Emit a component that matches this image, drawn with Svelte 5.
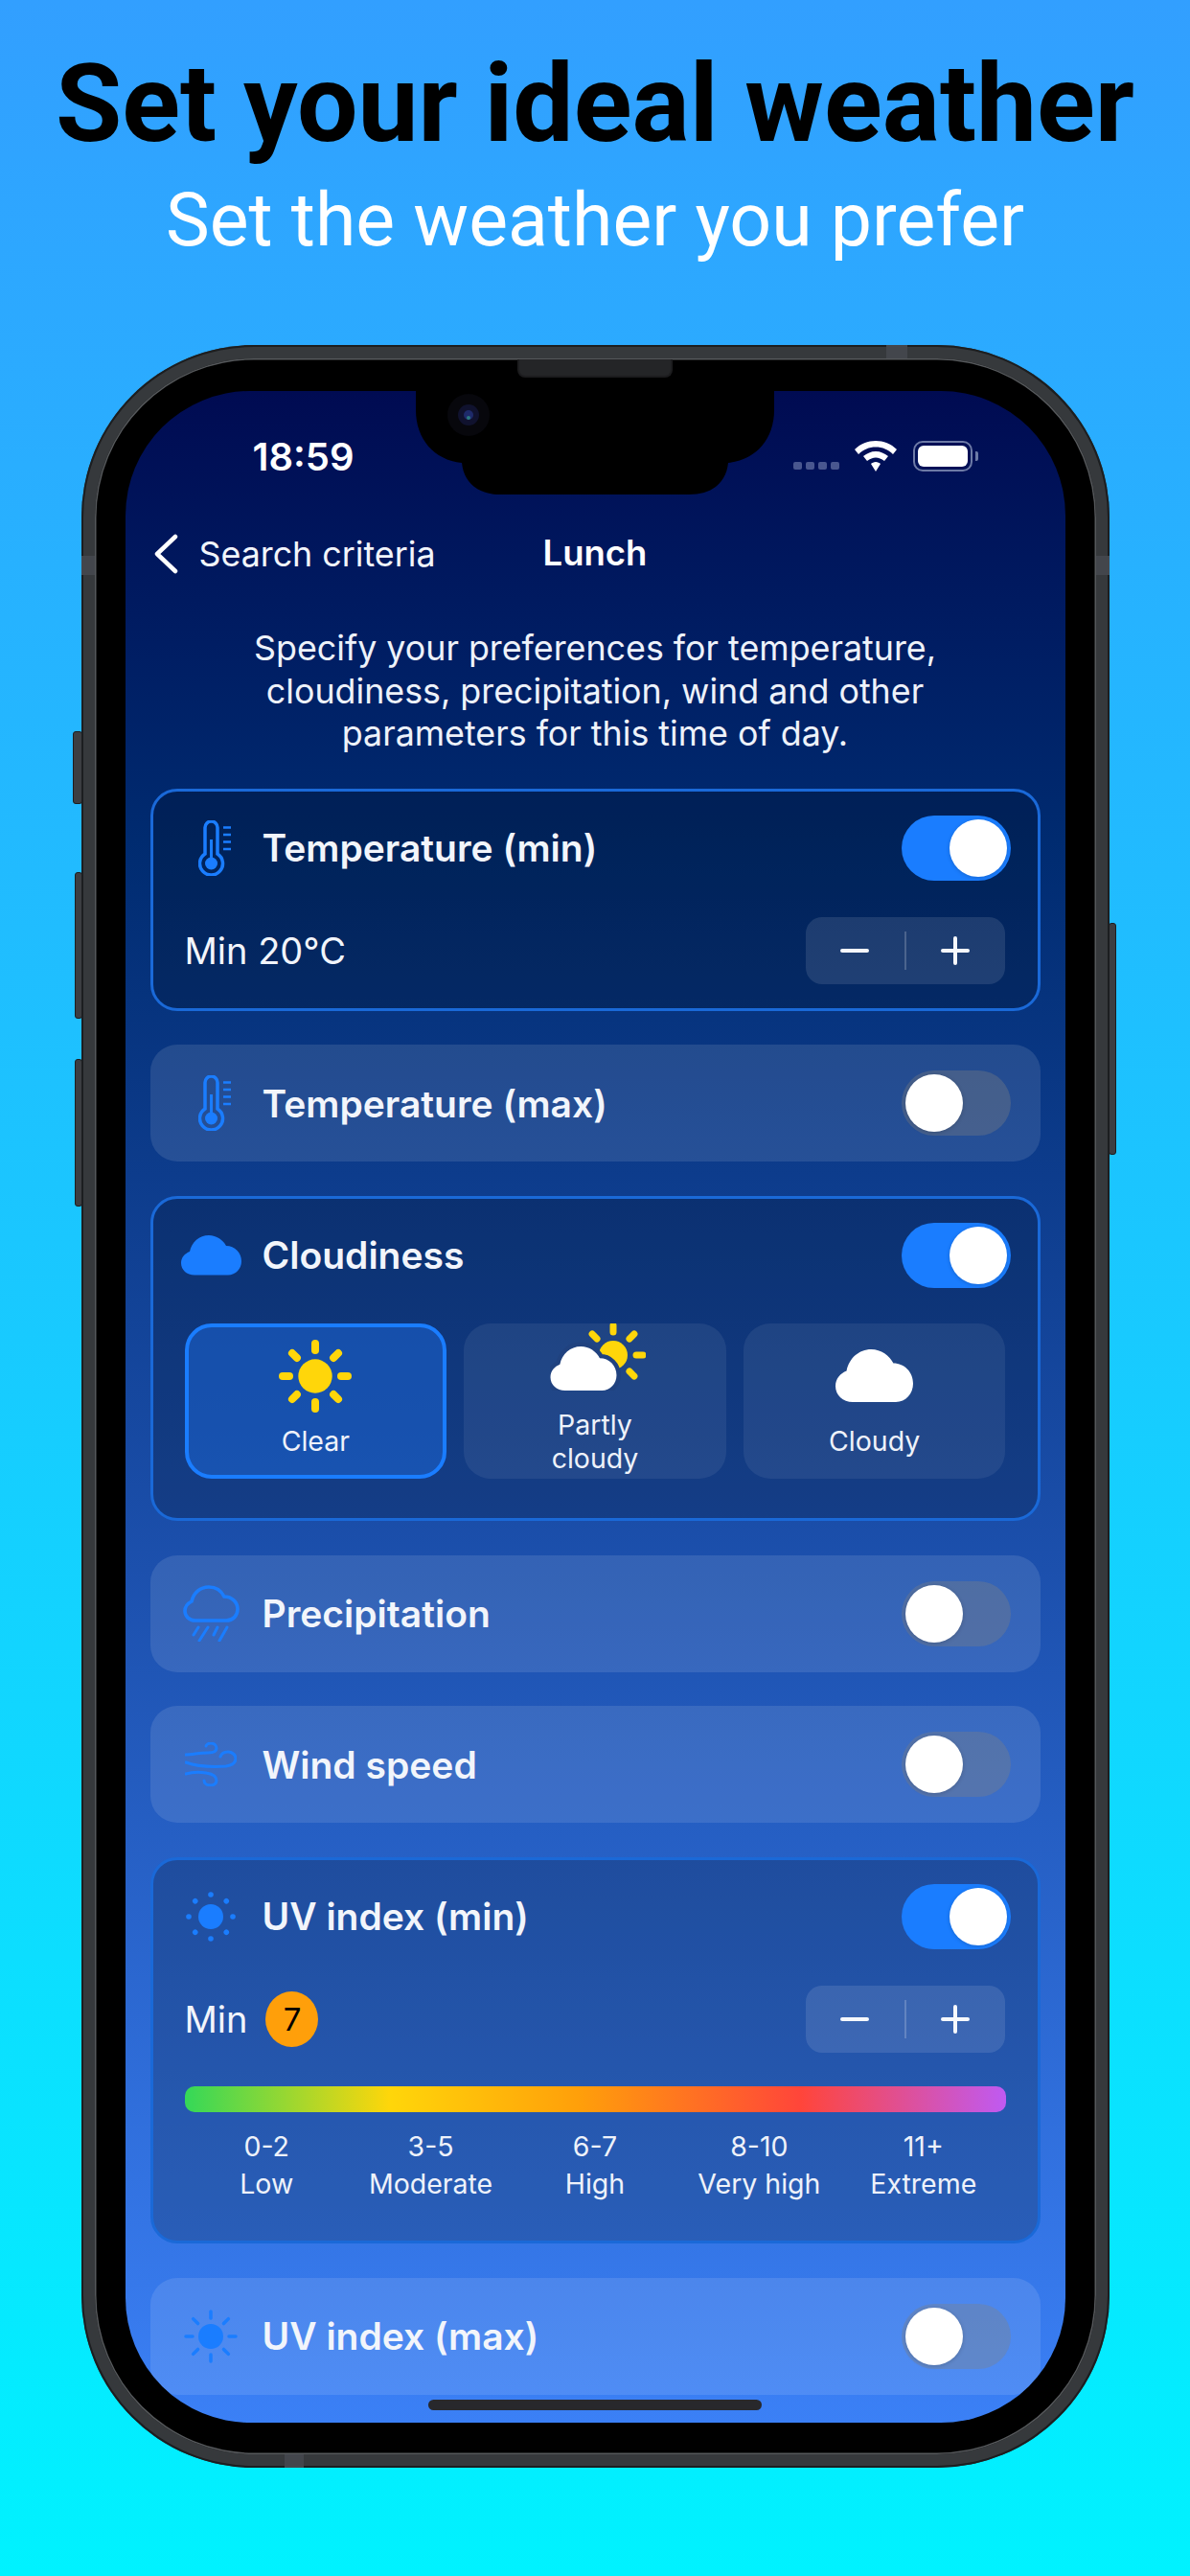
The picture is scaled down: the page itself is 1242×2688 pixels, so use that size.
<script lang="ts">
	const scale = [
		['0-2', 'Low'],
		['3-5', 'Moderate'],
		['6-7', 'High'],
		['8-10', 'Very high'],
		['11+', 'Extreme']
	];
	const diagonals = [0, 45, 90, 135, 180, 225, 270, 315];
	const cloud =
		'M14 41.5C6 41.5 0 36 0 29C0 23 4 19 9 17C11 7 19 0 29 0C37 0 44 5 47 11C56 11 63 18 63 27C63 35 57 41.5 49 41.5Z';
</script>

{#snippet thermometer()}
	<svg class="thermo" width="34" height="58" viewBox="0 0 34 58" fill="none" stroke="#1a7dff">
		<path stroke-width="3.5" d="M7 35V7.5a6.5 6.5 0 0 1 13 0V35A12 12 0 1 1 7 35Z" />
		<path stroke-width="3" d="M13.5 20V40" />
		<circle cx="13.5" cy="45" r="6.5" fill="#1a7dff" stroke="none" />
		<path stroke-width="2.6" d="M26 7.5h8M26 15h8M26 22.5h8M26 30h8" />
	</svg>
{/snippet}

{#snippet toggle(on: boolean)}
	<div class="toggle" class:on><div class="thumb"></div></div>
{/snippet}

{#snippet stepper()}
	<div class="stepper">
		<span class="step"><i class="bar"></i></span>
		<span class="divider"></span>
		<span class="step"><i class="bar"></i><i class="bar upright"></i></span>
	</div>
{/snippet}

<div class="page">
	<header class="hero">
		<h1>Set your ideal weather</h1>
		<p>Set the weather you prefer</p>
	</header>

	<div class="phone">
		<i class="side mute"></i>
		<i class="side vol-up"></i>
		<i class="side vol-down"></i>
		<i class="side power"></i>
		<i class="band band-top"></i>
		<i class="band band-bottom"></i>
		<i class="band band-left"></i>
		<i class="band band-right"></i>
		<div class="bezel">
			<div class="speaker"></div>
			<div class="screen">
				<svg class="notch" width="374" height="108" viewBox="0 0 374 108">
					<path
						fill="#000"
						d="M0 0H374V20C374 50 355 72 326 75C324 95 310 108 285 108H89C64 108 50 95 48 75C19 72 0 50 0 20Z"
					/>
					<circle cx="55" cy="25" r="22" fill="#07070c" />
					<circle cx="55" cy="25" r="11" fill="#10122e" />
					<circle cx="55" cy="25" r="5" fill="#1e2a6a" />
					<circle cx="55" cy="28" r="2" fill="#2a7a80" />
				</svg>

				<div class="status">
					<span class="time">18:59</span>
					<div class="status-right">
						<div class="dots"><i></i><i></i><i></i><i></i></div>
						<svg width="44" height="32" viewBox="0 0 44 32">
							<path
								fill="#fff"
								d="M22 0C30 0 38 3 44 9L40 14C35 9 29 6.500 22 6.500C15 6.500 9 9 4 14L0 9C6 3 14 0 22 0ZM22 11C27 11 31 13 35 16L31 21C28 19 25 17.500 22 17.500C19 17.500 16 19 13 21L9 16C13 13 17 11 22 11ZM22 22C24 22 26 23 27 24L22 32L17 24C18 23 20 22 22 22Z"
							/>
						</svg>
						<div class="battery"><div class="charge"></div></div>
					</div>
				</div>

				<nav class="nav">
					<div class="back">
						<svg width="26" height="42" viewBox="0 0 26 42" fill="none">
							<path d="M23 3L4 21L23 39" stroke="#fff" stroke-width="4.500" stroke-linecap="round" stroke-linejoin="round" />
						</svg>
						<span>Search criteria</span>
					</div>
					<strong>Lunch</strong>
				</nav>

				<p class="intro">
					Specify your preferences for temperature,<br />
					cloudiness, precipitation, wind and other<br />
					parameters for this time of day.
				</p>

				<div class="cards">
					<section class="card active">
						<div class="row">
							<div class="icon-box">{@render thermometer()}</div>
							<h2>Temperature (min)</h2>
							{@render toggle(true)}
						</div>
						<div class="value-row last">
							<span class="value">Min 20°C</span>
							{@render stepper()}
						</div>
					</section>

					<section class="card">
						<div class="row">
							<div class="icon-box">{@render thermometer()}</div>
							<h2>Temperature (max)</h2>
							{@render toggle(false)}
						</div>
					</section>

					<section class="card active">
						<div class="row">
							<div class="icon-box">
								<svg width="63" height="42" viewBox="0 0 63 42"><path fill="#1a7dff" d={cloud} /></svg>
							</div>
							<h2>Cloudiness</h2>
							{@render toggle(true)}
						</div>
						<div class="tiles">
							<div class="tile selected">
								<svg width="76" height="76" viewBox="-38 -38 76 76">
									<circle r="17.700" fill="#ffd60a" />
									{#each diagonals as a}
										<path
											d="M0 -34V-27"
											stroke="#ffd60a"
											stroke-width="8"
											stroke-linecap="round"
											transform="rotate({a})"
										/>
									{/each}
								</svg>
								<span class="tile-label">Clear</span>
							</div>
							<div class="tile partly">
								<svg width="100" height="70" viewBox="0 0 100 70">
									<g transform="translate(66 33)">
										<circle r="15" fill="#ffd60a" />
										{#each [0, 45, 90, 135, 315] as a}
											<path
												d="M0 -31V-24"
												stroke="#ffd60a"
												stroke-width="7"
												stroke-linecap="round"
												transform="rotate({a})"
											/>
										{/each}
									</g>
									<path
										transform="translate(0.5 24) scale(1.095 1.108)"
										fill="#fff"
										stroke="#20427f"
										stroke-width="8"
										paint-order="stroke"
										d={cloud}
									/>
								</svg>
								<span class="tile-label">Partly<br />cloudy</span>
							</div>
							<div class="tile cloudy">
								<svg width="81" height="55" viewBox="0 0 63 41.500" preserveAspectRatio="none"><path fill="#fff" d={cloud} /></svg>
								<span class="tile-label">Cloudy</span>
							</div>
						</div>
					</section>

					<section class="card">
						<div class="row">
							<div class="icon-box">
								<svg width="59" height="59" viewBox="0 0 59 59" fill="none" stroke="#1a7dff" stroke-linecap="round">
									<path
										stroke-width="3.600"
										d="M13 37C6 37 2 32 2 27C2 22 5 19 9 17C11 8 18 2 27 2C34 2 40 6 43 12C51 12 57 18 57 25C57 32 52 37 45 37Z"
									/>
									<path stroke-width="3" d="M16 44L11 52M26 44L17 58M36 44L32 52M46 44L38 58" />
								</svg>
							</div>
							<h2>Precipitation</h2>
							{@render toggle(false)}
						</div>
					</section>

					<section class="card">
						<div class="row">
							<div class="icon-box">
								<svg width="54" height="46" viewBox="0 0 54 46" fill="none" stroke="#1a7dff" stroke-width="3" stroke-linecap="round">
									<path d="M1 13C8 13 15 11 24 11C30 11 33 9 33 6C33 3 30 1 27 1C24 1 22 3 22 4" />
									<path d="M1 21C12 25 28 26 43 25C49 24 53 22 53 17C53 13 49 10 45 10C41 10 38 12 37 15" />
									<path d="M1 33C8 31 15 31 22 32C29 33 33 36 33 40C33 43 30 45 27 45C23 45 20 43 20 40" />
								</svg>
							</div>
							<h2>Wind speed</h2>
							{@render toggle(false)}
						</div>
					</section>

					<section class="card active">
						<div class="row">
							<div class="icon-box">
								<svg width="52" height="52" viewBox="-26 -26 52 52">
									<circle r="13" fill="#1a7dff" />
									{#each diagonals as a}
										<circle cy="-23" r="2.800" fill="#1a7dff" transform="rotate({a})" />
									{/each}
								</svg>
							</div>
							<h2>UV index (min)</h2>
							{@render toggle(true)}
						</div>
						<div class="value-row">
							<span class="value">Min <b class="badge">7</b></span>
							{@render stepper()}
						</div>
						<div class="uv-bar"></div>
						<div class="uv-scale">
							{#each scale as [range, label]}
								<div>{range}<br />{label}</div>
							{/each}
						</div>
					</section>

					<section class="card">
						<div class="row">
							<div class="icon-box">
								<svg width="56" height="56" viewBox="-28 -28 56 56">
									<circle r="13" fill="#1a7dff" />
									{#each diagonals as a}
										<path d="M0 -26V-19" stroke="#1a7dff" stroke-width="3.500" stroke-linecap="round" transform="rotate({a})" />
									{/each}
								</svg>
							</div>
							<h2>UV index (max)</h2>
							{@render toggle(false)}
						</div>
					</section>
				</div>

				<div class="home"></div>
			</div>
		</div>
	</div>
</div>

<style>
	:global(body) {
		margin: 0;
	}

	.page {
		width: 1242px;
		height: 2688px;
		overflow: hidden;
		background: linear-gradient(180deg, #329fff 0%, #00f2ff 100%);
		font-family: 'Inter', 'Liberation Sans', sans-serif;
		color: #f2f5fb;
	}

	.hero {
		height: 360px;
		text-align: center;
		font-family: 'Roboto', 'Liberation Sans', sans-serif;
	}

	.hero h1 {
		margin: 0;
		padding-top: 48px;
		font-size: 112.500px;
		line-height: 122px;
		font-weight: 700;
		color: #000;
	}

	.hero p {
		margin: 0;
		padding-top: 14px;
		font-size: 77px;
		line-height: 92px;
		font-weight: 400;
		color: #fff;
	}

	.phone {
		position: relative;
		box-sizing: border-box;
		width: 1073px;
		height: 2215px;
		margin: 0 auto;
		padding: 14px;
		border-radius: 180px;
		background: #36393c;
		box-shadow: inset 0 0 0 2px #1c1e20;
	}

	.side {
		position: absolute;
		box-sizing: border-box;
		background: #3c3e42;
		border: 1px solid #1c1e20;
		border-radius: 3px;
	}

	.mute {
		left: -9px;
		top: 403px;
		width: 10px;
		height: 76px;
	}

	.vol-up {
		left: -7px;
		top: 550px;
		width: 8px;
		height: 153px;
	}

	.vol-down {
		left: -7px;
		top: 745px;
		width: 8px;
		height: 154px;
	}

	.power {
		right: -7px;
		top: 603px;
		width: 8px;
		height: 242px;
	}

	.band {
		position: absolute;
		background: #43464c;
	}

	.band-top {
		top: 0;
		left: 840px;
		width: 22px;
		height: 14px;
	}

	.band-bottom {
		bottom: 0;
		left: 212px;
		width: 20px;
		height: 14px;
	}

	.band-left {
		left: 0;
		top: 220px;
		width: 14px;
		height: 20px;
	}

	.band-right {
		right: 0;
		top: 220px;
		width: 14px;
		height: 20px;
	}

	.bezel {
		position: relative;
		height: 100%;
		box-sizing: border-box;
		padding: 34px 32px 32px;
		border-radius: 166px;
		background: #000;
		box-shadow: inset 0 0 0 1.5px #55585b;
	}

	.speaker {
		position: absolute;
		z-index: 2;
		top: 1px;
		left: 50%;
		width: 162px;
		height: 19px;
		transform: translateX(-50%);
		box-sizing: border-box;
		border: 2px solid #1c1c1e;
		border-top: 0;
		border-radius: 0 0 8px 8px;
		background: #242527;
	}

	.screen {
		position: relative;
		box-sizing: border-box;
		height: 2120px;
		overflow: hidden;
		border-radius: 130px;
		padding: 0 26px;
		background: linear-gradient(180deg, #000b52 0%, #002b70 22%, #1c50ad 58%, #3b80f6 100%);
	}

	.notch {
		position: absolute;
		top: 0;
		left: 303px;
	}

	.status {
		display: flex;
		justify-content: space-between;
		align-items: flex-end;
		height: 84px;
		padding: 0 71px 0 107px;
	}

	.time {
		font-size: 40px;
		line-height: 40px;
		font-weight: 600;
		color: #fff;
		margin-bottom: -5px;
	}

	.status-right {
		display: flex;
		align-items: flex-end;
		gap: 17px;
	}

	.dots {
		display: flex;
		gap: 4px;
		margin-bottom: 2px;
		margin-right: -1px;
	}

	.dots i {
		width: 9px;
		height: 8px;
		border-radius: 2px;
		background: #49578f;
	}

	.battery {
		position: relative;
		box-sizing: border-box;
		width: 62px;
		height: 32px;
		padding: 3px;
		border: 2.500px solid #6d7aa6;
		border-radius: 10px;
	}

	.battery::after {
		content: '';
		position: absolute;
		right: -8px;
		top: 9px;
		width: 3px;
		height: 10px;
		border-radius: 0 2px 2px 0;
		background: #6d7aa6;
	}

	.charge {
		height: 100%;
		border-radius: 6px;
		background: #fff;
	}

	.nav {
		position: relative;
		display: flex;
		align-items: center;
		justify-content: center;
		height: 42px;
		margin-top: 64px;
	}

	.nav strong {
		font-size: 36.500px;
		font-weight: 600;
		color: #fff;
	}

	.back {
		position: absolute;
		left: 3px;
		top: 0;
		display: flex;
		align-items: center;
		gap: 22px;
		font-size: 35.800px;
	}

	.intro {
		margin: 56px 0 0;
		text-align: center;
		font-size: 35.800px;
		line-height: 44.500px;
		color: #eef2fa;
	}

	.cards {
		display: flex;
		flex-direction: column;
		gap: 35.700px;
		margin-top: 35px;
	}

	.card {
		flex: none;
		box-sizing: border-box;
		min-height: 122px;
		padding: 0 33px;
		border-radius: 28px;
		background: rgba(255, 255, 255, 0.11);
	}

	.card.active {
		border: 3px solid #1a69d8;
		background: rgba(0, 0, 0, 0.2);
	}

	.row {
		display: flex;
		align-items: center;
		height: 122px;
	}

	.card.active .row {
		height: 118px;
		margin-left: -3px;
		margin-right: -3px;
	}

	.icon-box {
		display: flex;
		justify-content: center;
		align-items: center;
		flex: none;
		width: 63px;
		margin-left: -1px;
		margin-right: 22px;
	}

	.icon-box svg {
		display: block;
	}

	.thermo {
		margin-left: 7px;
	}

	h2 {
		flex: 1;
		margin: 0;
		font-size: 39px;
		font-weight: 600;
		color: #f2f5fb;
	}

	.toggle {
		position: relative;
		flex: none;
		width: 114px;
		height: 68px;
		margin-right: -2px;
		border-radius: 34px;
		background: rgba(130, 130, 130, 0.35);
	}

	.toggle.on {
		background: #1a7dff;
	}

	.thumb {
		position: absolute;
		top: 4px;
		left: 4px;
		width: 60px;
		height: 60px;
		border-radius: 50%;
		background: #fff;
		box-shadow: 0 1px 4px rgba(0, 0, 0, 0.18);
	}

	.toggle.on .thumb {
		left: 50px;
	}

	.value-row {
		display: flex;
		align-items: center;
		justify-content: space-between;
		height: 70px;
		margin-top: 13px;
	}

	.value-row.last {
		margin-bottom: 25px;
	}

	.value {
		display: flex;
		align-items: center;
		gap: 19px;
		font-size: 38px;
		color: #f2f5fb;
	}

	.badge {
		display: flex;
		align-items: center;
		justify-content: center;
		width: 55px;
		height: 58px;
		border-radius: 50%;
		background: #ff9f0a;
		color: #000;
		font-size: 33px;
		font-weight: 400;
	}

	.stepper {
		display: flex;
		align-items: center;
		width: 208px;
		height: 70px;
		margin-right: 1px;
		border-radius: 17px;
		background: rgba(255, 255, 255, 0.11);
	}

	.step {
		position: relative;
		flex: 1;
		height: 100%;
	}

	.bar {
		position: absolute;
		left: 50%;
		top: 50%;
		width: 30px;
		height: 4px;
		margin: -2px 0 0 -15px;
		background: #f6f8fc;
		border-radius: 2px;
	}

	.bar.upright {
		transform: rotate(90deg);
	}

	.divider {
		width: 2px;
		height: 40px;
		background: rgba(255, 255, 255, 0.2);
	}

	.tiles {
		display: grid;
		grid-template-columns: repeat(3, 1fr);
		gap: 18px;
		margin-top: 12px;
		padding-bottom: 41px;
	}

	.tile {
		display: flex;
		flex-direction: column;
		align-items: center;
		box-sizing: border-box;
		height: 162px;
		border-radius: 28px;
		background: rgba(255, 255, 255, 0.07);
	}

	.tile svg {
		flex: none;
		display: block;
	}

	.tile.selected {
		padding-top: 13px;
		border: 4px solid #1a7dff;
		background: rgba(30, 110, 230, 0.45);
	}

	.tile.partly svg {
		margin-left: 6px;
	}

	.tile.cloudy {
		padding-top: 27px;
	}

	.tile-label {
		margin-top: 12px;
		font-size: 28.500px;
		line-height: 35px;
		text-align: center;
		color: #eef2fa;
	}

	.tile.partly .tile-label {
		margin-top: 18px;
	}

	.tile.cloudy .tile-label {
		margin-top: 23px;
	}

	.uv-bar {
		height: 27px;
		margin-top: 35px;
		border-radius: 10px;
		background: linear-gradient(90deg, #34d858 0%, #ffd60a 25%, #ff9f0a 48%, #ff453a 75%, #bf5af2 100%);
	}

	.uv-scale {
		display: grid;
		grid-template-columns: repeat(5, 1fr);
		margin-top: 16px;
		padding-bottom: 40px;
		text-align: center;
		font-size: 28.500px;
		line-height: 39px;
		color: #eef2fa;
	}

	.home {
		position: absolute;
		left: 50%;
		bottom: 13px;
		width: 348px;
		height: 11px;
		margin-left: -174px;
		border-radius: 6px;
		background: #28282c;
	}
</style>
